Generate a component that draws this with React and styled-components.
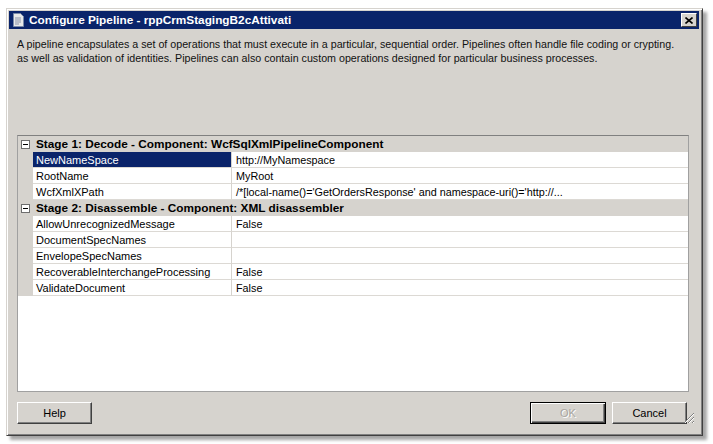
import React from 'react'
import styled, { createGlobalStyle } from 'styled-components'

const GlobalStyle = createGlobalStyle`
  html, body {
    margin: 0;
    padding: 0;
    background: #ffffff;
  }
  body {
    font-family: 'Liberation Sans', Arial, sans-serif;
    font-size: 11px;
    color: #000;
  }
`

const Page = styled.div`
  width: 713px;
  height: 444px;
  padding: 8px 0 0 6px;
  box-sizing: border-box;
`

const Window = styled.div`
  width: 697px;
  height: 428px;
  box-sizing: border-box;
  background: #d6d3ce;
  border: 1px solid #404040;
  border-top-color: #d6d3ce;
  border-left-color: #d6d3ce;
  box-shadow: inset 1px 1px 0 #ffffff, inset -1px -1px 0 #808080, 4px 4px 3px rgba(0, 0, 0, 0.35);
  padding: 2px 3px 3px 2px;
  display: flex;
  flex-direction: column;
`

const TitleBar = styled.div`
  height: 18px;
  background: #0a246a;
  display: flex;
  align-items: center;
  padding: 0 2px 0 4px;
  gap: 5px;
  color: #fff;
  font-weight: bold;
  font-size: 11.8px;
`

const TitleText = styled.span`
  flex: 1;
  white-space: nowrap;
`

const CloseButton = styled.div`
  width: 16px;
  height: 14px;
  box-sizing: border-box;
  background: #d6d3ce;
  border: 1px solid #404040;
  border-top-color: #fff;
  border-left-color: #fff;
  display: flex;
  align-items: center;
  justify-content: center;
`

const Body = styled.div`
  flex: 1;
  display: flex;
  flex-direction: column;
  padding: 8px 8px 0 8px;
`

const Description = styled.p`
  margin: 0;
  font-size: 10.7px;
  line-height: 14px;
  color: #111;
  height: 98px;
  white-space: nowrap;
`

const Grid = styled.div`
  height: 257px;
  box-sizing: border-box;
  background: #fff;
  border: 1px solid #a0a0a0;
  border-top-color: #808080;
  display: grid;
  grid-template-columns: 15px 199px 1fr;
  grid-auto-rows: 16px;
  align-content: start;
  margin-right: 2px;
`

const Gutter = styled.div`
  background: #d6d3ce;
  display: flex;
  align-items: center;
  justify-content: center;
`

const Toggle = styled.div`
  width: 9px;
  height: 9px;
  box-sizing: border-box;
  border: 1px solid #6e6e6e;
  background: #fff;
  display: flex;
  align-items: center;
  justify-content: center;
  &::after {
    content: '';
    width: 5px;
    height: 1px;
    background: #000;
  }
`

const Category = styled.div`
  grid-column: 2 / 4;
  background: #d6d3ce;
  font-weight: bold;
  font-size: 11.8px;
  display: flex;
  align-items: center;
  padding-left: 3px;
  white-space: nowrap;
`

const Cell = styled.div`
  display: flex;
  align-items: center;
  padding-left: ${(p) => (p.$name ? '3px' : '4px')};
  border-bottom: 1px solid #dcd9d4;
  border-right: ${(p) => (p.$name ? '1px solid #d6d3ce' : 'none')};
  background: ${(p) => (p.$selected ? '#0a246a' : '#fff')};
  color: ${(p) => (p.$selected ? '#fff' : '#000')};
  font-size: ${(p) => (p.$name ? '11px' : '10.8px')};
  white-space: nowrap;
  overflow: hidden;
`

const ButtonRow = styled.div`
  display: flex;
  align-items: center;
  padding: 9px 4px 0 0;
  gap: 6px;
  position: relative;
  height: 32px;
  box-sizing: border-box;
`

const Spacer = styled.div`
  flex: 1;
`

const Button = styled.div`
  height: 22px;
  width: ${(p) => p.$w}px;
  box-sizing: border-box;
  display: flex;
  align-items: center;
  justify-content: center;
  background: #d6d3ce;
  border: 1px solid ${(p) => (p.$default ? '#000' : '#404040')};
  border-top-color: ${(p) => (p.$default ? '#000' : '#fff')};
  border-left-color: ${(p) => (p.$default ? '#000' : '#fff')};
  box-shadow: ${(p) =>
    p.$default
      ? 'inset 1px 1px 0 #fff, inset -1px -1px 0 #404040, inset -2px -2px 0 #808080'
      : 'inset -1px -1px 0 #808080'};
  color: ${(p) => (p.$disabled ? '#a8a59f' : '#000')};
  text-shadow: ${(p) => (p.$disabled ? '1px 1px 0 #fff' : 'none')};
  font-size: 11px;
`

const Grip = styled.svg`
  position: absolute;
  right: -4px;
  bottom: 0;
`

const stages = [
  {
    title: 'Stage 1: Decode - Component: WcfSqlXmlPipelineComponent',
    props: [
      ['NewNameSpace', 'http://MyNamespace', true],
      ['RootName', 'MyRoot'],
      ['WcfXmlXPath', "/*[local-name()='GetOrdersResponse' and namespace-uri()='http://..."],
    ],
  },
  {
    title: 'Stage 2: Disassemble - Component: XML disassembler',
    props: [
      ['AllowUnrecognizedMessage', 'False'],
      ['DocumentSpecNames', ''],
      ['EnvelopeSpecNames', ''],
      ['RecoverableInterchangeProcessing', 'False'],
      ['ValidateDocument', 'False'],
    ],
  },
]

const PipelineIcon = () => (
  <svg width="11" height="14" viewBox="0 0 11 14">
    <path d="M0.5 0.5h7l3 3v10h-10z" fill="#e8e8e8" stroke="#7a8aa8" />
    <path d="M2 5h6M2 7h6M2 9h6M2 11h4" stroke="#8a94aa" strokeWidth="1" />
  </svg>
)

const App = () => (
  <>
    <GlobalStyle />
    <Page>
      <Window>
        <TitleBar>
          <PipelineIcon />
          <TitleText>Configure Pipeline - rppCrmStagingB2cAttivati</TitleText>
          <CloseButton>
            <svg width="8" height="7" viewBox="0 0 8 7">
              <path d="M0.5 0.5l7 6M7.5 0.5l-7 6" stroke="#000" strokeWidth="1.6" />
            </svg>
          </CloseButton>
        </TitleBar>
        <Body>
          <Description>
            A pipeline encapsulates a set of operations that must execute in a particular, sequential order. Pipelines often handle file coding or crypting.
            <br />
            as well as validation of identities. Pipelines can also contain custom operations designed for particular business processes.
          </Description>
          <Grid>
            {stages.map((stage) => (
              <React.Fragment key={stage.title}>
                <Gutter>
                  <Toggle />
                </Gutter>
                <Category>{stage.title}</Category>
                {stage.props.map(([name, value, selected]) => (
                  <React.Fragment key={name}>
                    <Gutter />
                    <Cell $name $selected={selected}>
                      {name}
                    </Cell>
                    <Cell>{value}</Cell>
                  </React.Fragment>
                ))}
              </React.Fragment>
            ))}
          </Grid>
          <ButtonRow>
            <Button $w={75}>Help</Button>
            <Spacer />
            <Button $w={76} $default $disabled>
              OK
            </Button>
            <Button $w={75}>Cancel</Button>
            <Grip width="12" height="12" viewBox="0 0 12 12">
              <path d="M11 1L1 11M11 5L5 11M11 9L9 11" stroke="#808080" strokeWidth="1" />
              <path d="M11 2L2 11M11 6L6 11M11 10L10 11" stroke="#fff" strokeWidth="1" />
            </Grip>
          </ButtonRow>
        </Body>
      </Window>
    </Page>
  </>
)

export default App
